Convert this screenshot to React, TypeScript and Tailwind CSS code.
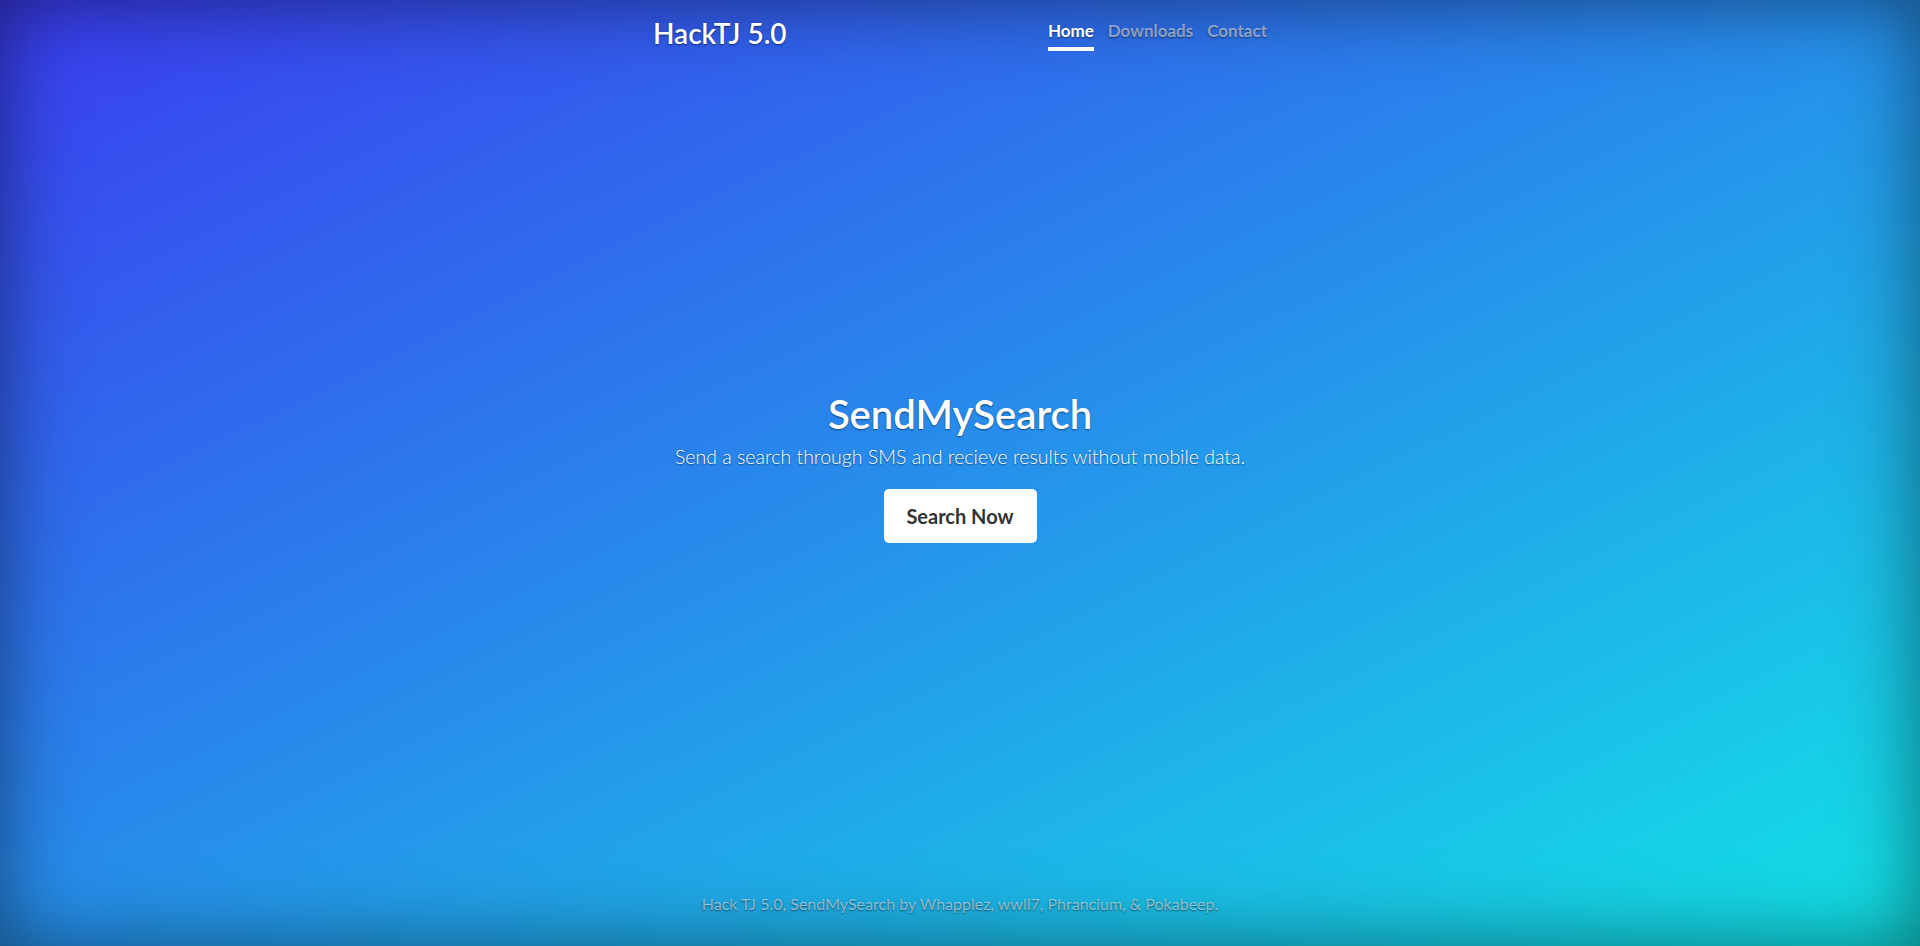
import React from "react";

const NAV = ["Home", "Downloads", "Contact"];

export default function App() {
  return (
    <div className="flex h-screen w-full flex-col bg-[linear-gradient(to_bottom_right,#3b3cf0,#12e3e6)] text-white shadow-[inset_0_0_5rem_rgba(0,0,0,0.5)] [font-family:Lato,'Noto_Sans',sans-serif] [text-shadow:0_0.05rem_0.1rem_rgba(0,0,0,0.5)]">
      <header className="mx-auto flex w-[614px] items-start justify-between pt-4">
        <h3 className="text-[28px] font-semibold leading-[34px]">HackTJ 5.0</h3>
        <nav className="-mt-[1px] flex gap-[14px]">
          {NAV.map((item, i) => (
            <a
              key={item}
              href="#"
              className={`border-b-4 py-1 text-[17px] font-bold leading-6 ${
                i === 0 ? "border-white text-white" : "border-transparent text-white/50"
              }`}
            >
              {item}
            </a>
          ))}
        </nav>
      </header>

      <main className="flex flex-1 flex-col items-center justify-center pb-[10px]">
        <h1 className="text-[40px] font-semibold leading-[48px]">SendMySearch</h1>
        <p className="mt-1 text-[19.5px] font-light leading-[30px]">
          Send a search through SMS and recieve results without mobile data.
        </p>
        <a
          href="#"
          className="mt-[17px] flex h-[54px] w-[153px] items-center justify-center rounded-[5px] bg-white text-xl font-bold text-[#333] [text-shadow:none]"
        >
          Search Now
        </a>
      </main>

      <footer className="pb-[30px] text-center text-base leading-6 text-white/50">
        Hack TJ 5.0, SendMySearch by Whapplez, wwll7, Phrancium, &amp; Pokabeep.
      </footer>
    </div>
  );
}
